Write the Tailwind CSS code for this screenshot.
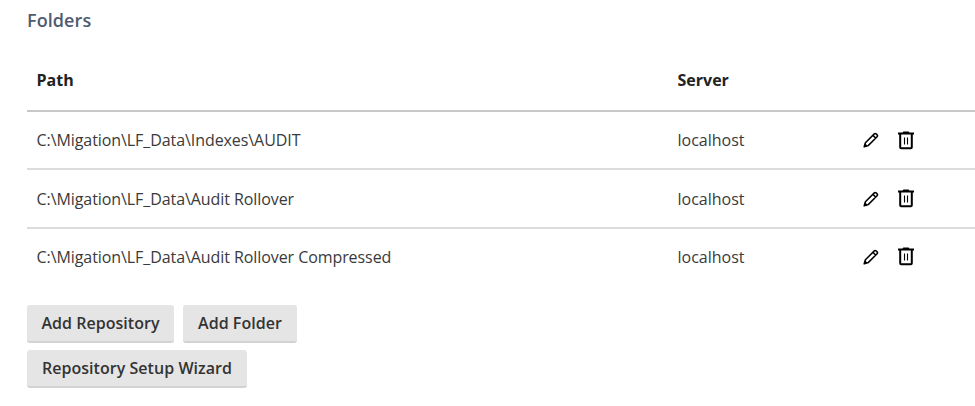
<!DOCTYPE html>
<html lang="en">

<head>
    <meta charset="utf-8" />
    <meta name="viewport" content="width=device-width, initial-scale=1" />
    <title>Folders</title>
    <script src="https://cdn.jsdelivr.net/npm/@tailwindcss/browser@4"></script>
</head>

<body class="bg-white font-['Open_Sans',sans-serif] text-[#3a3a3a] overflow-hidden">
    <svg class="hidden">
        <symbol id="pencil" viewBox="0 0 16 16">
            <path d="M1.2 14.8l1.2-4L11.3 1.9a1.3 1.3 0 0 1 1.8 0l1 1a1.3 1.3 0 0 1 0 1.8L5.2 13.6zM10 3.4l2.6 2.6" fill="none" stroke="currentColor" stroke-width="1.5" stroke-linejoin="round" />
            <path d="M.8 15.2l1.2-4 2.8 2.8z" fill="currentColor" />
        </symbol>
        <symbol id="trash" viewBox="0 0 16 19">
            <path d="M0 2.5h16M2.2 3v13.2a1 1 0 0 0 1 1h9.6a1 1 0 0 0 1-1V3" fill="none" stroke="currentColor" stroke-width="2" />
            <path d="M4.5 2l.8-1.5h5.4l.8 1.5z" fill="currentColor" />
            <path d="M6.5 6.5v7M9.5 6.5v7" stroke="currentColor" stroke-width="1.1" />
        </symbol>
    </svg>
    <main class="pl-[27px] pt-[8px]">
        <h1 class="text-[18px] leading-6 font-semibold tracking-[0.08px] text-[#4f5b6e]">Folders</h1>
        <div class="mt-[18px] text-[16px]">
            <div class="flex h-[62px] items-center border-b-2 border-[#c8c8c8] pb-px pl-[9.5px] font-bold text-[#222]">
                <div class="w-[641px]">Path</div>
                <div>Server</div>
            </div>
            <div id="folders"></div>
        </div>
        <div class="mt-[18px] flex w-[300px] flex-wrap gap-x-[9px] gap-y-[7px] text-[16px] font-semibold text-[#333]">
            <button class="h-[38px] w-[147px] rounded-[3px] border-b-2 border-[#d2d2d2] bg-[#e5e5e5] tracking-[0.04px]">Add Repository</button>
            <button class="h-[38px] w-[114px] rounded-[3px] border-b-2 border-[#d2d2d2] bg-[#e5e5e5] tracking-[0.04px]">Add Folder</button>
            <button class="h-[38px] w-[220px] rounded-[3px] border-b-2 border-[#d2d2d2] bg-[#e5e5e5] tracking-[0.04px]">Repository Setup Wizard</button>
        </div>
    </main>
    <script>
        const folders = [
            { path: 'C:\\Migation\\LF_Data\\Indexes\\AUDIT', server: 'localhost' },
            { path: 'C:\\Migation\\LF_Data\\Audit Rollover', server: 'localhost' },
            { path: 'C:\\Migation\\LF_Data\\Audit Rollover Compressed', server: 'localhost' }
        ];

        document.getElementById('folders').innerHTML = folders.map(folder => `
            <div class="flex h-[58.4px] items-center border-b-2 border-[#dcdcdc] pl-[9.5px] last:border-transparent">
                <div class="w-[641px] tracking-[-0.075px]">${folder.path}</div>
                <div class="w-[185px]">${folder.server}</div>
                <svg class="mr-[19px] size-4 text-black"><use href="#pencil" /></svg>
                <svg class="h-[19px] w-4 text-black"><use href="#trash" /></svg>
            </div>
        `).join('');
    </script>
</body>

</html>
